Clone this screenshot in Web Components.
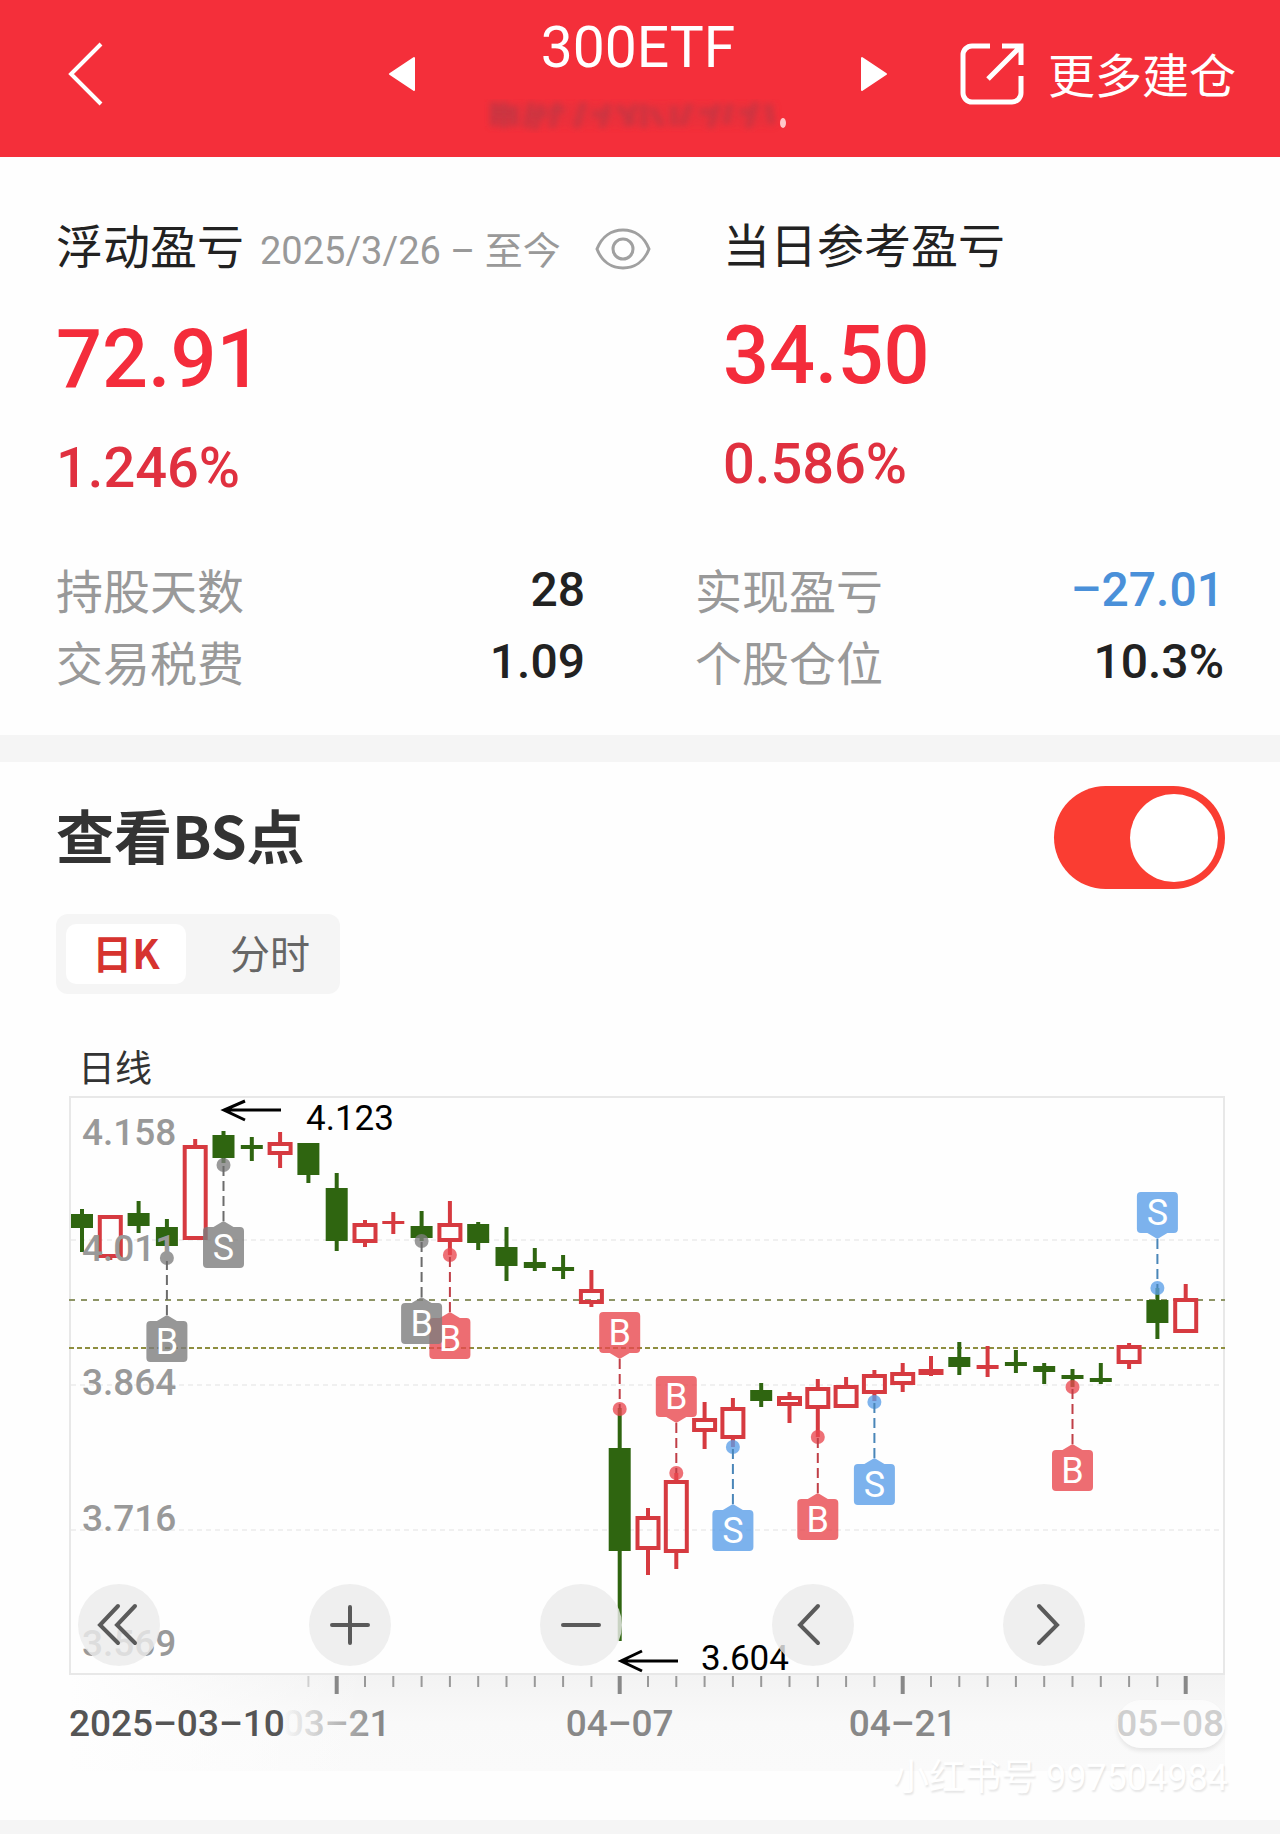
<!DOCTYPE html>
<html lang="zh-CN">
<head>
<meta charset="utf-8">
<meta name="viewport" content="width=device-width, initial-scale=1">
<title>300ETF</title>
<style>
  body{margin:0;background:#fefefe;color:#222;font-family:Roboto,"Noto Sans CJK SC",sans-serif}
  main{display:block}
</style>
</head>
<body>
<app-header>
  <span slot="title">300ETF</span>
  <span slot="action">更多建仓</span>
</app-header>
<main>
  <pnl-summary>
    <pnl-block amount="72.91" percent="1.246%" eye>浮动盈亏<span slot="note">2025/3/26 – 至今</span></pnl-block>
    <pnl-block amount="34.50" percent="0.586%">当日参考盈亏</pnl-block>
    <stat-item slot="stats" label="持股天数">28</stat-item>
    <stat-item slot="stats" label="实现盈亏" tone="down">–27.01</stat-item>
    <stat-item slot="stats" label="交易税费">1.09</stat-item>
    <stat-item slot="stats" label="个股仓位">10.3%</stat-item>
  </pnl-summary>
  <bs-panel>
    <span slot="title">查看BS点</span>
    <toggle-switch slot="toggle" label="查看BS点"></toggle-switch>
    <tab-group slot="tabs" items="日K,分时"></tab-group>
    <k-chart caption="日线"></k-chart>
  </bs-panel>
  <page-mark>小红书号 997504984</page-mark>
</main>

<script>
class AppHeader extends HTMLElement {
  constructor(){
    super();
    this.attachShadow({mode:'open'}).innerHTML=`
      <style>
        :host{display:block;background:#f42f3a;color:#fff}
        header{display:grid;grid-template-columns:1fr 500px 1fr;align-items:center;padding:0 44px 9px 40px}
        button,a{background:none;border:0;padding:0;color:inherit;font:inherit;text-decoration:none;cursor:pointer}
        svg{display:block}
        .back{justify-self:start;margin-left:26px}
        .mid{display:flex;justify-content:space-between;align-items:center}
        .name{display:flex;flex-direction:column;align-items:center;gap:14px;padding:16px 0 12px}
        h1{margin:0;font-size:57px;line-height:64px;font-weight:400}
        a{display:flex;align-items:center;justify-self:end;gap:24px;font-size:47px;line-height:56px}
        .txt{padding-top:6px}
      </style>
      <header>
        <button class="back" aria-label="返回">
          <svg width="40" height="64" viewBox="0 0 40 64" fill="none" stroke="#fff" stroke-width="4"><path d="M35 2 5 32l30 30"/></svg>
        </button>
        <div class="mid">
          <button aria-label="上一个"><svg width="28" height="36" viewBox="0 0 28 36" fill="#fff" stroke="#fff" stroke-width="2" stroke-linejoin="round"><path d="M26 2v32L2 18z"/></svg></button>
          <div class="name">
            <h1><slot name="title"></slot></h1>
            <svg width="308" height="42" viewBox="0 0 308 42" aria-hidden="true">
              <defs><filter id="b"><feGaussianBlur stdDeviation="3"/></filter></defs>
              <g filter="url(#b)" fill="none" stroke="#b93744" stroke-width="6" opacity=".7">
                <path d="M8 21h284" stroke-width="24" opacity=".22"/>
                <path d="M10 8v24M20 8v26M8 18h22M30 12v20" stroke-width="8"/>
                <path d="M48 8l-6 26M42 20h22M58 10l-8 26M74 8 68 34M66 16h14"/>
                <path d="M100 8 92 34M108 20h18M124 10l-6 24M134 12l16 18M152 10l-10 22M160 10v24M168 14l10 18"/>
                <path d="M190 12v20M206 10l-8 22M216 18h14M234 10l-8 24M246 10l-4 20M256 18h14M272 8l-8 26M284 10l4 20"/>
              </g>
              <ellipse cx="299" cy="29" rx="3" ry="5" fill="#ffc7c9"/>
            </svg>
          </div>
          <button aria-label="下一个"><svg width="28" height="36" viewBox="0 0 28 36" fill="#fff" stroke="#fff" stroke-width="2" stroke-linejoin="round"><path d="M2 2v32l24-16z"/></svg></button>
        </div>
        <a href="#more">
          <svg width="64" height="64" viewBox="0 0 64 64" fill="none" stroke="#fff" stroke-width="5">
            <path d="M30 4H12a9 9 0 0 0-9 9v38a9 9 0 0 0 9 9h40a9 9 0 0 0 9-9V34"/><path d="M42 4h19v19M60 5 28 37"/>
          </svg>
          <span class="txt"><slot name="action"></slot></span>
        </a>
      </header>`;
  }
}
customElements.define('app-header', AppHeader);

class PnlSummary extends HTMLElement {
  constructor(){
    super();
    this.attachShadow({mode:'open'}).innerHTML=`
      <style>
        :host{display:block;padding:62px 56px 34px;border-bottom:27px solid #f5f5f5}
        .top{display:grid;grid-template-columns:667fr 501fr;align-items:start}
        .stats{display:grid;grid-template-columns:1fr 1fr;column-gap:110px;margin-top:57px}
      </style>
      <div class="top"><slot></slot></div>
      <div class="stats"><slot name="stats"></slot></div>`;
  }
}
customElements.define('pnl-summary', PnlSummary);

class PnlBlock extends HTMLElement {
  constructor(){
    super();
    const eye=this.hasAttribute('eye');
    this.attachShadow({mode:'open'}).innerHTML=`
      <style>
        :host{display:block}
        .head{display:flex;align-items:center;min-height:56px;font-size:47px;line-height:56px}
        :host([eye]) .head{min-height:60px}
        .label{display:flex;align-items:baseline;gap:16px}
        ::slotted([slot=note]){font-size:38px;color:#999}
        button{margin-left:34px;padding:0;border:0;background:none;cursor:pointer}
        svg{display:block}
        .amount,.percent{font-weight:500}
        .amount{margin-top:33px;font-size:81px;line-height:96px;color:#f42c3b}
        .percent{margin-top:28px;font-size:56px;line-height:64px;color:#e0303f}
      </style>
      <div class="head">
        <div class="label"><span><slot></slot></span><slot name="note"></slot></div>
        ${eye?`<button aria-label="隐藏金额"><svg width="56" height="42" viewBox="0 0 56 42" fill="none" stroke="#a0a0a0" stroke-width="3">
          <path d="M2 21C7 8 17 2 28 2s21 6 26 19c-5 13-15 19-26 19S7 34 2 21z"/><circle cx="28" cy="21" r="10"/></svg></button>`:''}
      </div>
      <div class="amount">${this.getAttribute('amount')}</div>
      <div class="percent">${this.getAttribute('percent')}</div>`;
  }
}
customElements.define('pnl-block', PnlBlock);

class StatItem extends HTMLElement {
  constructor(){
    super();
    this.attachShadow({mode:'open'}).innerHTML=`
      <style>
        :host{display:flex;justify-content:space-between;align-items:flex-start;line-height:72px}
        .k{font-size:47px;color:#999}
        .v{font-size:48px;line-height:66px;font-weight:500;color:#222}
        :host([tone=down]) .v{color:#4a90d9}
      </style>
      <span class="k">${this.getAttribute('label')}</span><span class="v"><slot></slot></span>`;
  }
}
customElements.define('stat-item', StatItem);

class BsPanel extends HTMLElement {
  constructor(){
    super();
    this.attachShadow({mode:'open'}).innerHTML=`
      <style>
        :host{display:block;padding:24px 0 0}
        .row{display:flex;justify-content:space-between;align-items:center;padding:0 55px 0 56px}
        h2{margin:0 0 8px;font:700 58px/64px "Noto Sans CJK SC",sans-serif;color:#333}
        .tabs{padding:25px 56px 50px}
      </style>
      <div class="row"><h2><slot name="title"></slot></h2><slot name="toggle"></slot></div>
      <div class="tabs"><slot name="tabs"></slot></div>
      <slot></slot>`;
  }
}
customElements.define('bs-panel', BsPanel);

class ToggleSwitch extends HTMLElement {
  constructor(){
    super();
    this.attachShadow({mode:'open'}).innerHTML=`
      <style>
        :host{display:block}
        input{appearance:none;display:flex;align-items:center;box-sizing:border-box;width:171px;height:103px;margin:0;padding:7px;border-radius:52px;background:#ccc;cursor:pointer}
        input::before{content:"";width:88px;height:88px;border-radius:50%;background:#fff}
        input:checked{justify-content:flex-end;background:#fa3d32}
      </style>
      <input type="checkbox" role="switch" aria-label="${this.getAttribute('label')}" checked>`;
  }
}
customElements.define('toggle-switch', ToggleSwitch);

class TabGroup extends HTMLElement {
  constructor(){
    super();
    const items=this.getAttribute('items').split(',');
    const s=this.attachShadow({mode:'open'});
    s.innerHTML=`
      <style>
        :host{display:flex;width:max-content;gap:24px;padding:10px;border-radius:12px;background:#f5f5f5}
        button{box-sizing:border-box;width:120px;height:60px;padding:0 0 4px;border:0;border-radius:10px;background:none;color:#666;font:400 40px/56px "Noto Sans CJK SC",sans-serif;cursor:pointer}
        button[aria-pressed=true]{background:#fff;color:#d6332f;font-weight:700}
      </style>
      ${items.map((t,i)=>`<button aria-pressed="${i===0}">${t}</button>`).join('')}`;
    const btns=[...s.querySelectorAll('button')];
    btns.forEach(b=>b.addEventListener('click',()=>btns.forEach(o=>o.setAttribute('aria-pressed',o===b))));
  }
}
customElements.define('tab-group', TabGroup);

const STEP=283/10, X0=13;
const RED='#d63a40', GREEN='#2f6510';

// side, high, body top, body bottom, low
const CANDLES=[
  ['g',209,214,228,252],['r',215,215,258,260],['g',201,213,226,233],['g',219,227,246,246],
  ['r',139,145,240,240],['g',131,135,158,163],['g',137,145,149,161],['r',132,142,155,168],
  ['g',143,143,175,183],['g',173,188,241,251],['r',220,223,243,247],['r',212,221,224,234],
  ['g',211,226,238,241],['r',201,223,242,255],['g',222,224,243,250],['g',227,247,266,281],
  ['g',248,262,268,271],['g',255,267,271,279],['r',270,289,304,307],['g',408,448,551,641],
  ['r',508,516,550,575],['r',473,480,553,569],['r',402,418,432,449],['r',398,407,439,447],
  ['g',383,390,401,407],['r',392,396,406,423],['r',379,387,409,437],['r',377,385,408,408],
  ['r',370,374,394,401],['r',363,372,385,392],['r',356,369,375,376],['g',342,357,367,375],
  ['r',346,365,369,377],['g',350,362,366,373],['g',363,366,372,384],['g',369,375,379,387],
  ['g',363,378,382,384],['r',343,345,364,369],['g',288,300,323,339],['r',284,298,333,333]
];

// candle index, letter, colour, dot y, box top
const MARKS=[
  [3,'B','gray',258,321],[5,'S','gray',165,227],[13,'B','red',255,318],[12,'B','gray',241,303],
  [19,'B','red',409,312],[21,'B','red',473,376],[23,'S','blue',447,510],[26,'B','red',437,499],
  [28,'S','blue',402,464],[35,'B','red',387,450],[38,'S','blue',288,192]
];
const FILL={gray:'#7d7d7d',red:'#e9484f',blue:'#5b9fe8'};
const LINE={gray:'#6c6c6c',red:'#c03f47',blue:'#4a86b8'};

class KChart extends HTMLElement {
  constructor(){
    super();
    const icon=d=>`<svg width="82" height="82" viewBox="0 0 82 82" fill="none" stroke="#5a5a5a" stroke-width="4" stroke-linecap="round"><path d="${d}"/></svg>`;
    this.attachShadow({mode:'open'}).innerHTML=`
      <style>
        :host{display:block;padding:0 55px 0 69px}
        figure{margin:0}
        figcaption{padding-left:9px;font-size:37px;line-height:52px;color:#333}
        svg{display:block}
        .plot{position:relative}
        .plot>svg,.axis svg{width:100%;height:auto;overflow:visible}
        .tools{position:absolute;inset:auto -9px 9px 9px;display:grid;grid-template-columns:repeat(5,1fr)}
        button{justify-self:start;width:82px;height:82px;padding:0;border:0;border-radius:50%;background:rgba(235,235,235,.82);cursor:pointer}
        .axis{position:relative;background:linear-gradient(90deg,#fefefe,rgba(254,254,254,0) 26%),linear-gradient(#f3f3f3,#f9f9f9 50%,#fafafa)}
        .pill{position:absolute;right:0;top:25px;width:108px;height:48px;border-radius:24px;background:rgba(255,255,255,.6);box-shadow:0 3px 4px rgba(0,0,0,.08)}
        text{font-family:Roboto,"Noto Sans CJK SC",sans-serif}
        .price,.date{font-size:37px;font-weight:500;fill:#999}
        .date{fill:#888}
        .tip{font-size:35px;fill:#000}
      </style>
      <figure>
        <figcaption>${this.getAttribute('caption')}</figcaption>
        <div class="plot">
          <svg viewBox="0 96 1156 579" role="img" aria-label="${this.getAttribute('caption')}">${this._plot()}</svg>
          <div class="tools">
            <button aria-label="最早">${icon('M40 22 22 41l18 18M57 22 39 41l18 18')}</button>
            <button aria-label="放大">${icon('M41 23v36M23 41h36')}</button>
            <button aria-label="缩小">${icon('M23 41h36')}</button>
            <button aria-label="向左">${icon('M46 22 28 41l18 18')}</button>
            <button aria-label="向右">${icon('M36 22l18 19-18 18')}</button>
          </div>
        </div>
        <div class="axis"><svg viewBox="0 0 1156 96">${this._axis()}</svg><div class="pill"></div></div>
      </figure>`;
  }

  _x(i){ return X0+i*STEP; }

  _plot(){
    let o='<rect x="1" y="97" width="1154" height="577" fill="none" stroke="#e8e8e8" stroke-width="2"/>';
    [240,385,530].forEach(y=>{ o+=`<path d="M2 ${y}h1152" stroke="#e2e2e2" stroke-dasharray="5 4"/>`; });
    o+='<path d="M0 300h1156" stroke="#8d9465" stroke-width="2" stroke-dasharray="6 6"/>';
    o+='<path d="M0 348h1156" stroke="#8e8e3f" stroke-width="2" stroke-dasharray="5 3"/>';

    CANDLES.forEach(([side,hi,top,bot,lo],i)=>{
      const x=this._x(i), c=side==='g'?GREEN:RED;
      if(side==='g' || bot-top<8){
        const w=side==='r'&&bot-top>4?25:22;
        o+=`<path d="M${x} ${hi}V${lo}" stroke="${c}" stroke-width="4"/><rect x="${x-w/2}" y="${top}" width="${w}" height="${bot-top}" fill="${c}"/>`;
      }else{
        o+=`<path d="M${x} ${hi}V${top+2}M${x} ${bot-2}V${lo}" stroke="${c}" stroke-width="4"/><rect x="${x-10.5}" y="${top+2}" width="21" height="${bot-top-4}" fill="none" stroke="${c}" stroke-width="4"/>`;
      }
    });

    MARKS.forEach(([i,ch,c,dot,top])=>{
      const x=this._x(i), up=top<dot, tip=up?top+47:top-6, base=up?top+41:top;
      o+=`<circle cx="${x}" cy="${dot}" r="7" fill="${FILL[c]}" opacity=".78"/>
        <path d="M${x} ${tip}V${dot}" stroke="${LINE[c]}" stroke-width="2" stroke-dasharray="10 5"/>
        <g opacity=".8" fill="${FILL[c]}"><path d="M${x-20.5} ${top+4}q0-4 4-4${up?'':`h6.5L${x} ${tip}l10 6`}H${x+16.5}q4 0 4 4v33q0 4-4 4${up?`H${x+10}L${x} ${tip} ${x-10} ${base}`:''}H${x-16.5}q-4 0-4-4z"/></g>
        <text x="${x}" y="${top+33}" font-size="36" fill="#fff" text-anchor="middle">${ch}</text>`;
    });

    [['4.158',145],['4.011',261],['3.864',395],['3.716',531],['3.569',656]].forEach(([t,y])=>{
      o+=`<text class="price" x="13" y="${y}">${t}</text>`;
    });
    // high / low pointers
    o+='<path d="M212 110h-57M176 101l-21 9 21 10M609 661h-57M573 651l-21 10 21 10" fill="none" stroke="#000" stroke-width="3"/>';
    o+='<text class="tip" x="237" y="130">4.123</text><text class="tip" x="632" y="670">3.604</text>';
    return o;
  }

  _axis(){
    let o='<defs><linearGradient id="f"><stop offset="0" stop-color="#888" stop-opacity="0"/><stop offset=".9" stop-color="#888"/></linearGradient></defs>';
    for(let i=8;i<40;i++){
      const big=i%10===9;
      o+=`<path d="M${this._x(i)} 1v${big?18:11}" stroke="${big?'#888':'#999'}" stroke-width="${big?4:2}" opacity="${i===8?.4:1}"/>`;
    }
    o+='<text class="date" x="0" y="61" style="fill:#555">2025–03–10</text>';
    o+=`<text class="date" x="${this._x(9)}" y="61" text-anchor="middle" style="fill:url(#f)">03–21</text>`;
    o+=`<text class="date" x="${this._x(19)}" y="61" text-anchor="middle">04–07</text>`;
    o+=`<text class="date" x="${this._x(29)}" y="61" text-anchor="middle">04–21</text>`;
    o+='<text class="date" x="1155" y="61" text-anchor="end">05–08</text>';
    return o;
  }
}
customElements.define('k-chart', KChart);

class PageMark extends HTMLElement {
  constructor(){
    super();
    this.attachShadow({mode:'open'}).innerHTML=`
      <style>
        :host{display:block;position:relative;height:49px;border-bottom:14px solid #f5f5f5}
        span{position:absolute;right:52px;bottom:22px;font-size:36px;line-height:40px;color:#fff;text-shadow:1px 2px 2px rgba(0,0,0,.1)}
      </style>
      <span><slot></slot></span>`;
  }
}
customElements.define('page-mark', PageMark);
</script>
</body>
</html>
